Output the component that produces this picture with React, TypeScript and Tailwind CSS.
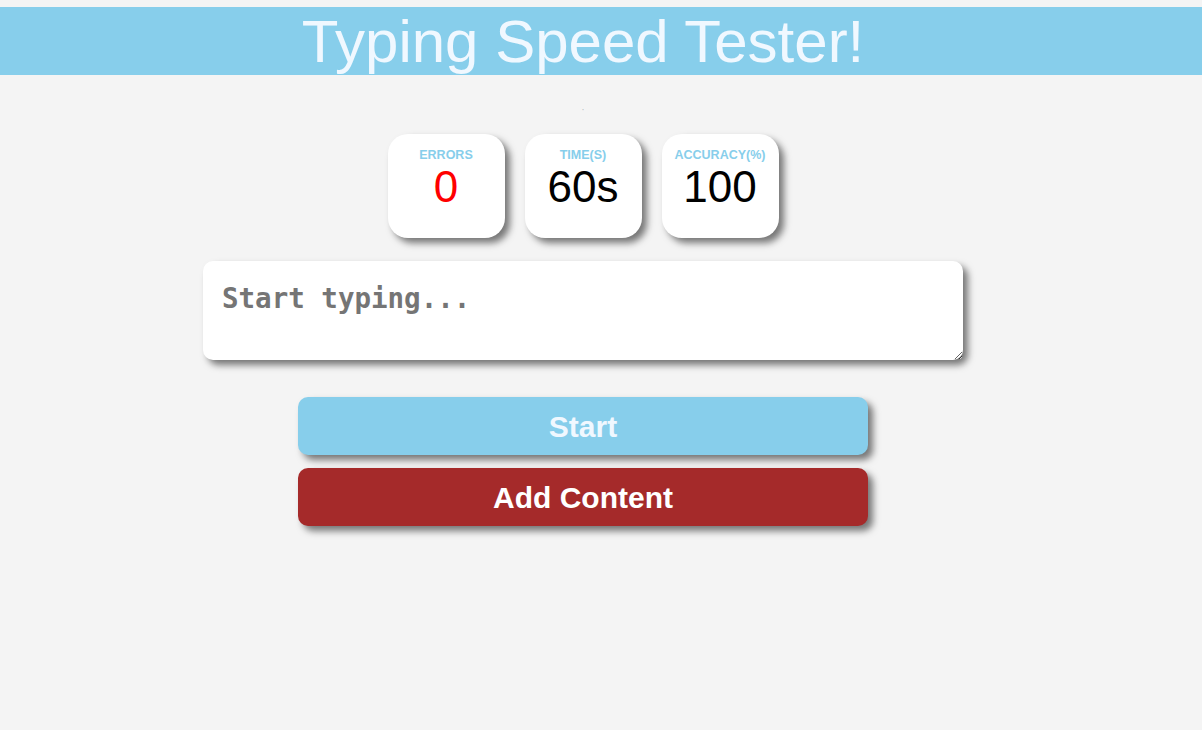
import { useState } from 'react';

function StatCard({ label, value, red }: { label: string; value: string; red?: boolean }) {
  return (
    <div className="w-[117px] h-[104px] bg-white rounded-[20px] shadow-[5px_5px_7px_#777777] flex flex-col items-center pt-[14px]">
      <span className="text-[12.5px] font-bold leading-[14px] text-[#87ceeb]">{label}</span>
      <span className={`text-[44px] leading-[50px] ${red ? 'text-[#ff0000]' : 'text-black'}`}>{value}</span>
    </div>
  );
}

export default function App() {
  const [text, setText] = useState('');

  return (
    <div className="min-h-[730px] bg-[#f4f4f4] pt-[7px] font-['Liberation_Sans',Arial,sans-serif]">
      <div className="w-[1166px]">
        <header className="h-[68px] bg-[#87ceeb] w-[1202px] flex items-start">
          <h1 className="w-[1166px] h-[68px] text-center text-[60px] leading-[70px] text-[#f0f8ff]">
            Typing Speed Tester!
          </h1>
        </header>

        <p className="text-center text-[5px] leading-[6px] text-gray-500 mt-[33px]">'</p>

        <div className="flex justify-center gap-5 mt-[20px]">
          <StatCard label="ERRORS" value="0" red />
          <StatCard label="TIME(S)" value="60s" />
          <StatCard label="ACCURACY(%)" value="100" />
        </div>

        <div className="flex justify-center mt-[23px]">
          <textarea
            value={text}
            onChange={(e) => setText(e.target.value)}
            placeholder="Start typing..."
            className="w-[760px] h-[99px] bg-white rounded-[10px] shadow-[5px_5px_7px_#777777] px-[19px] pt-[20px] text-[27.5px] leading-[34px] font-bold font-['DejaVu_Sans_Mono',monospace] placeholder:text-[#757575] outline-none"
          />
        </div>

        <div className="flex flex-col items-center gap-[13px] mt-[37px]">
          <button className="w-[570px] h-[58px] rounded-[10px] bg-[#87ceeb] text-[#f0f8ff] text-[30px] font-bold shadow-[5px_5px_7px_#777777]">
            Start
          </button>
          <button className="w-[570px] h-[58px] rounded-[10px] bg-[#a52a2a] text-white text-[30px] font-bold shadow-[5px_5px_7px_#777777]">
            Add Content
          </button>
        </div>
      </div>
    </div>
  );
}
